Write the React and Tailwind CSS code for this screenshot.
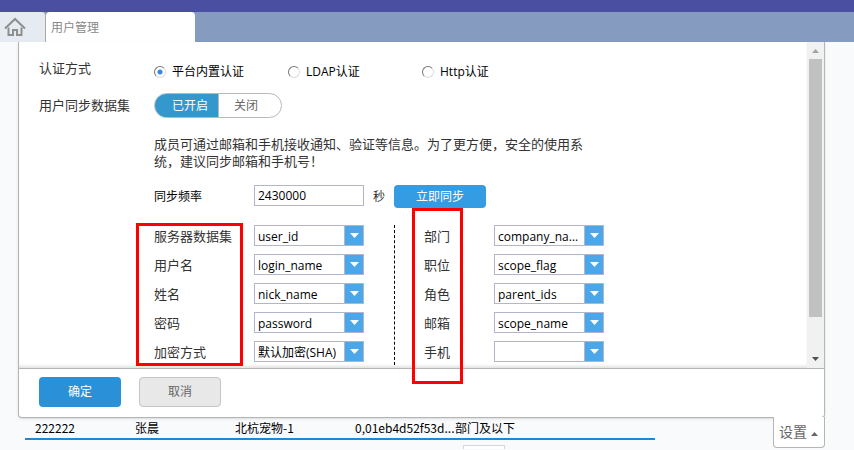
import { useState } from "react";

const userFields = [
  { id: "dataset", label: "服务器数据集", value: "user_id" },
  { id: "login", label: "用户名", value: "login_name" },
  { id: "nick", label: "姓名", value: "nick_name" },
  { id: "password", label: "密码", value: "password" },
  { id: "encrypt", label: "加密方式", value: "默认加密(SHA)" },
];

const orgFields = [
  { id: "dept", label: "部门", value: "company_name" },
  { id: "position", label: "职位", value: "scope_flag" },
  { id: "role", label: "角色", value: "parent_ids" },
  { id: "email", label: "邮箱", value: "scope_name" },
  { id: "phone", label: "手机", value: "" },
];

const authTypes = ["平台内置认证", "LDAP认证", "Http认证"];

function HomeIcon() {
  return (
    <svg width="22" height="20" viewBox="0 0 22 20" fill="none" stroke="#8e8e8e" strokeWidth="2">
      <path d="M1 11.500 L11 2 L21 11.500" />
      <path d="M4.500 10.500 V18 H9 V13 H13 V18 H17.500 V10.500" />
    </svg>
  );
}

function SelectField({ field }) {
  return (
    <>
      <label htmlFor={field.id} className="text-[13px] leading-[22px] text-[#333]">
        {field.label}
      </label>
      <div className="flex h-[21px] w-[110px] border border-[#b3b6cb] bg-white">
        <select
          id={field.id}
          defaultValue={field.value}
          className="w-0 flex-1 appearance-none overflow-hidden text-ellipsis whitespace-nowrap bg-white pt-[2px] pl-[3px] text-xs text-black outline-none"
        >
          <option>{field.value}</option>
        </select>
        <span className="pointer-events-none flex w-[19px] items-center justify-center border-l border-[#b3b6cb] bg-[#4aa8ea]">
          <svg width="9" height="5" viewBox="0 0 9 5" fill="#fff">
            <path d="M0 0H9L4.500 5Z" />
          </svg>
        </span>
      </div>
    </>
  );
}

function FieldColumn({ fields, className }) {
  return (
    <div className={className}>
      {fields.map((f) => (
        <SelectField key={f.id} field={f} />
      ))}
    </div>
  );
}

function ScrollBar() {
  return (
    <div className="flex w-[17px] shrink-0 flex-col items-center bg-[#f1f1f1]">
      <div className="flex h-[17px] items-center">
        <svg width="7" height="4" viewBox="0 0 7 4" fill="#a3a3a3">
          <path d="M0 4H7L3.500 0Z" />
        </svg>
      </div>
      <div className="w-[13px] flex-5 bg-[#c1c1c1]" />
      <div className="flex flex-1 items-end">
        <svg width="7" height="4" viewBox="0 0 7 4" fill="#505050" className="mb-[7px]">
          <path d="M0 0H7L3.500 4Z" />
        </svg>
      </div>
    </div>
  );
}

export default function App() {
  const [auth, setAuth] = useState(0);
  const [rate, setRate] = useState("2430000");

  return (
    <div className="min-h-screen overflow-hidden bg-[#f9fafc] font-['Open_Sans','Noto_Sans_CJK_SC',sans-serif] text-xs text-black">
      <header>
        <div className="h-3 bg-[#4b4fa1]" />
        <nav className="flex h-[30px] bg-[#869bc0]">
          <a href="#home" aria-label="首页" className="flex w-[46px] items-center rounded-tr border-r border-[#a5a9b3] bg-[#e6ebf2] pl-1">
            <HomeIcon />
          </a>
          <a href="#users" className="w-[149px] rounded-t bg-white pl-[5px] leading-[31px] text-[#888]">
            用户管理
          </a>
        </nav>
      </header>

      <main>
        <section className="relative mr-[29px] ml-[18px] rounded-b border border-t-0 border-[#b5b5b5] bg-white shadow-sm">
          <div className="flex">
            <div className="flex-1 pt-4 pb-[3px] pl-5 shadow-[inset_0_-3px_3px_-1px_#e2e2e2]">
              <div className="flex h-7">
                <span className="w-[115px] text-[13px] leading-5 text-[#333]">认证方式</span>
                <div className="flex items-center">
                  {authTypes.map((name, i) => (
                    <label key={name} className="flex w-[134px] items-center gap-[6px]">
                      <input
                        type="radio"
                        name="auth"
                        checked={auth === i}
                        onChange={() => setAuth(i)}
                        className="h-3 w-3 appearance-none rounded-full border border-t-[#777] border-r-[#ddd] border-b-[#ddd] border-l-[#777] bg-white checked:bg-[radial-gradient(circle,#3b82ee_2px,#fff_3px)]"
                      />
                      {name}
                    </label>
                  ))}
                </div>
              </div>

              <div className="mt-[7px] flex">
                <span className="w-[115px] text-[13px] leading-[25px] text-[#333]">用户同步数据集</span>
                <div className="flex h-[25px] w-32 overflow-hidden rounded-full border border-[#b9b9b9]">
                  <button className="-my-px -ml-px w-16 bg-[#3498cc] pl-2 text-white">已开启</button>
                  <button className="flex-1 border-l border-[#b9b9b9] pr-2 text-[#666]">关闭</button>
                </div>
              </div>

              <div className="pl-[115px]">
                <p className="mt-[18px] max-w-[440px] text-[13px] leading-[17px] text-[#333]">
                  成员可通过邮箱和手机接收通知、验证等信息。为了更方便，安全的使用系统，建议同步邮箱和手机号！
                </p>

                <div className="mt-[15px] flex h-[23px]">
                  <label htmlFor="rate" className="w-[100px] leading-[23px]">
                    同步频率
                  </label>
                  <input
                    id="rate"
                    value={rate}
                    onChange={(e) => setRate(e.target.value)}
                    className="h-[21px] w-[110px] border border-[#b3b6cb] pl-[3px] outline-none"
                  />
                  <span className="w-[30px] pl-[9px] leading-[23px] text-[#333]">秒</span>
                  <button className="w-[92px] rounded-sm bg-[#349ce3] text-white">立即同步</button>
                </div>

                <div className="mt-[17px] flex">
                  <FieldColumn
                    fields={userFields}
                    className="grid auto-rows-[21px] grid-cols-[100px_110px] gap-y-2 pr-[30px]"
                  />
                  <FieldColumn
                    fields={orgFields}
                    className="grid auto-rows-[21px] grid-cols-[70px_110px] gap-y-2 border-l border-dashed border-black pb-[3px] pl-[29px]"
                  />
                </div>
              </div>
            </div>
            <ScrollBar />
          </div>

          <div className="flex gap-[18px] border-t border-[#b5b5b5] pt-2 pb-[10px] pl-5">
            <button className="h-[30px] w-[82px] rounded-sm bg-[#2a91d8] text-white">确定</button>
            <button className="h-[30px] w-[82px] rounded-sm border border-[#c4c4c4] bg-[#e8e8e8] text-[#666]">
              取消
            </button>
          </div>

          {/* highlight frames over the label columns */}
          <div className="pointer-events-none absolute top-[181px] left-[117px] h-[143px] w-[107px] border-3 border-[#f00]" />
          <div className="pointer-events-none absolute top-[166px] left-[393px] h-[176px] w-[51px] border-3 border-[#f00]" />

          <button className="absolute top-full -right-px flex h-[31px] w-[52px] items-center gap-1 rounded-b border border-t-0 border-[#b5b5b5] bg-white pl-[5px] text-sm text-[#666]">
            设置
            <svg width="7" height="4" viewBox="0 0 7 4" fill="#666" className="mt-1">
              <path d="M0 4H7L3.500 0Z" />
            </svg>
          </button>
        </section>

        <table className="ml-[25px] w-[630px] table-fixed border-b-2 border-[#1e88d0] font-['Noto_Sans_CJK_SC',sans-serif]">
          <colgroup>
            <col className="w-[100px]" />
            <col className="w-[100px]" />
            <col className="w-[120px]" />
            <col className="w-[100px]" />
            <col />
          </colgroup>
          <tbody>
            <tr className="h-[21px] leading-4">
              <td className="pl-[10px]">222222</td>
              <td className="pl-[10px]">张晨</td>
              <td className="pl-[10px]">北杭宠物-1</td>
              <td className="whitespace-nowrap pl-[10px]">0,01eb4d52f53d...</td>
              <td className="pl-[10px]">部门及以下</td>
            </tr>
          </tbody>
        </table>
        <div className="mt-[5px] ml-[463px] h-1 w-[42px] border border-b-0 border-[#d3d7dd] bg-white" />
      </main>
    </div>
  );
}
